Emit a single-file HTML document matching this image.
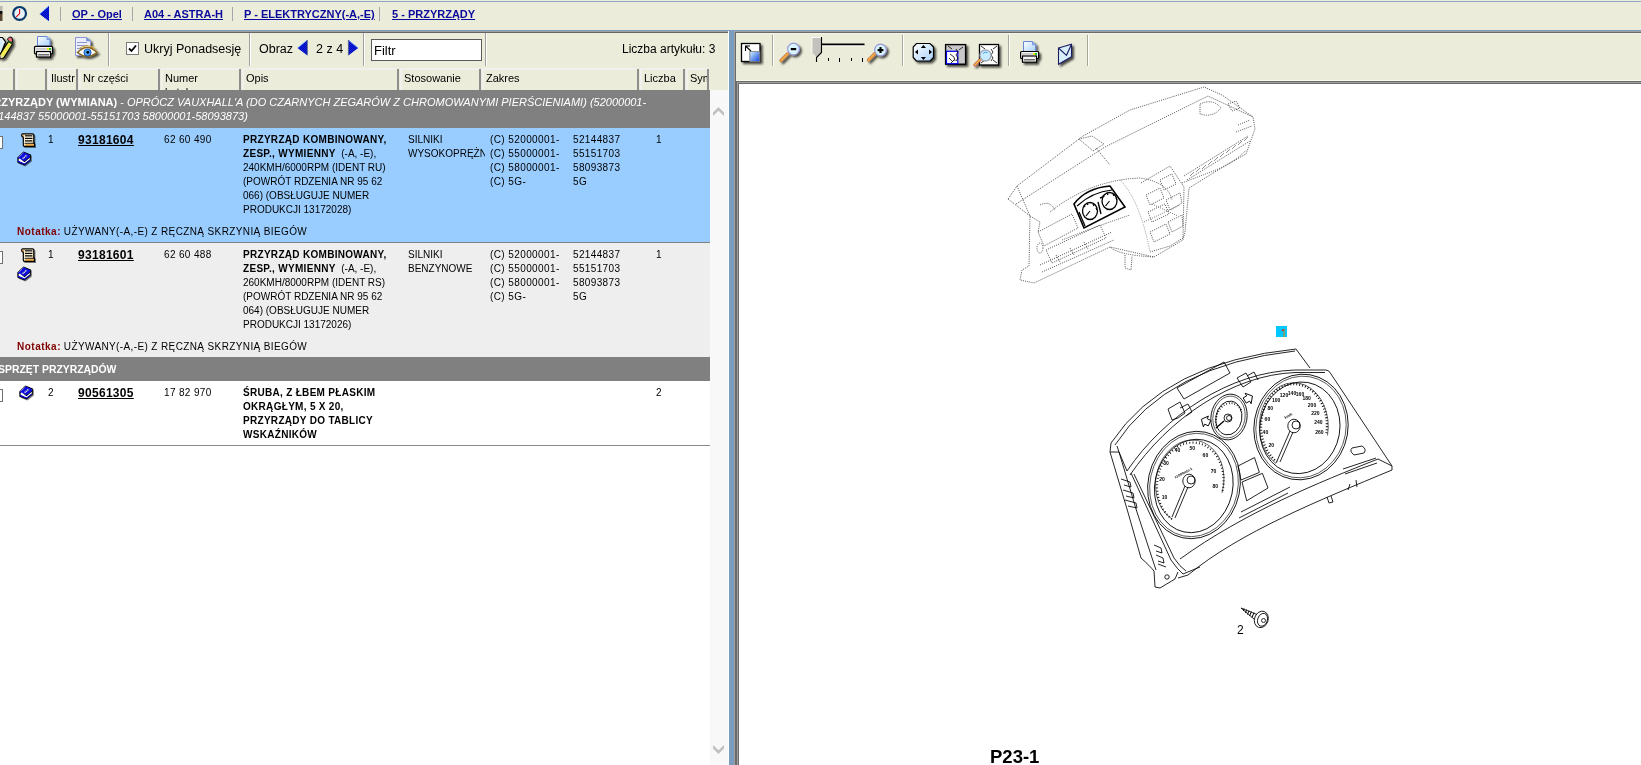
<!DOCTYPE html>
<html><head><meta charset="utf-8">
<style>
*{box-sizing:border-box}
html,body{will-change:transform;margin:0;padding:0;width:1641px;height:765px;overflow:hidden;background:#fff;font-family:"Liberation Sans",sans-serif;color:#000}
.a{position:absolute}
.nw{white-space:nowrap}
#top{left:0;top:0;width:1641px;height:30px;background:#ECECDA}
#topl1{left:0;top:1px;width:1641px;height:1px;background:#8FA8C8}
#topl2{left:0;top:30px;width:1641px;height:1px;background:#7A9CBF}
.sep{width:1px;background:#A7A6AA}
.lnk{font-weight:bold;font-size:11px;color:#0A0A9C;text-decoration:underline;text-underline-offset:1px;top:7px;line-height:14px}
#lp{left:0;top:31px;width:729px;height:734px;background:#fff;overflow:hidden}
#ltb{left:0;top:0;width:729px;height:37px;background:#ECECDA;border-top:2px solid #7A7A7A}
.tsep{width:2px;border-left:1px solid #A0A0A0;border-right:1px solid #fff}
#hdr{left:0;top:37px;width:710px;height:22px;background:#ECECDA}
.hc{top:68px;height:22px;background:#ECECDA;box-shadow:inset 2px 2px 0 #F0F0EC;font-size:11px;line-height:14px;padding:3px 0 0 5px;overflow:hidden}
.hs{top:69px;width:2px;height:21px;background:#8E8E8E}
.grp{left:0;width:710px;background:#808080;color:#fff;font-size:10px;line-height:14px;overflow:hidden}
.row{left:0;width:710px;font-size:10px;line-height:14px;overflow:hidden;border-bottom:1px solid #A0A0A0}
.b{font-weight:bold;letter-spacing:.3px}
#sb{left:710px;top:59px;width:18px;height:675px;background:#F8F8F8}
.t10{font-size:10px;line-height:14px;white-space:nowrap}
.dig{letter-spacing:.35px}
.pn{font-size:12px;font-weight:bold;line-height:15px;text-decoration:underline;letter-spacing:.3px;white-space:nowrap}
.nt{color:#800000;font-weight:bold;letter-spacing:.5px}
.cb{left:-10px;width:13px;height:13px;background:#fff;border:1px solid #707070}
.rsep{top:35px;width:2px;height:31px;border-left:1px solid #ACA899;border-right:1px solid #FFFFFF}
#split{left:729px;top:30px;width:5px;height:735px;background:#7A9CBF}
#rp{left:734px;top:31px;width:907px;height:734px;background:#ECECDA;border-top:2px solid #7A7A7A;border-left:2px solid #6A6A6A}
#draw{left:739px;top:83px;width:902px;height:682px;background:#fff}
</style></head><body>
<!-- TOP BREADCRUMB BAR -->
<div id="top" class="a"></div>
<div id="topl1" class="a"></div>
<div id="topl2" class="a"></div>
<div class="a sep" style="left:60px;top:7px;height:14px"></div>
<div class="a lnk nw" style="left:72px">OP - Opel</div>
<div class="a sep" style="left:132px;top:7px;height:14px"></div>
<div class="a lnk nw" style="left:144px">A04 - ASTRA-H</div>
<div class="a sep" style="left:232px;top:7px;height:14px"></div>
<div class="a lnk nw" style="left:244px">P - ELEKTRYCZNY(-A,-E)</div>
<div class="a sep" style="left:379px;top:7px;height:14px"></div>
<div class="a lnk nw" style="left:392px">5 - PRZYRZĄDY</div>

<!-- LEFT PANEL -->
<div class="a" style="left:0;top:31px;width:729px;height:1px;background:#A0A0A0"></div><div class="a" style="left:0;top:32px;width:728px;height:1px;background:#666"></div><div class="a" style="left:0;top:33px;width:728px;height:1px;background:#F6F6EA"></div>
<div class="a" style="left:0;top:33px;width:728px;height:35px;background:#ECECDA"></div>
<div class="a" style="left:728px;top:31px;width:1px;height:734px;background:#fff"></div>
<!-- toolbar separators -->
<div class="a tsep" style="left:108px;top:33px;height:33px"></div>
<div class="a tsep" style="left:249px;top:33px;height:33px"></div>
<div class="a tsep" style="left:363px;top:33px;height:33px"></div>
<div class="a tsep" style="left:485px;top:33px;height:33px"></div>
<!-- checkbox -->
<div class="a" style="left:126px;top:42px;width:13px;height:13px;background:#fff;border:1px solid #7A7A7A"></div>
<svg class="a" style="left:126px;top:42px" width="13" height="13"><path d="M3 6.5 L5.5 9 L10 3.5" stroke="#000" stroke-width="1.8" fill="none"/></svg>
<div class="a nw" style="left:144px;top:42px;font-size:12.5px;line-height:15px">Ukryj Ponadsesję</div>
<div class="a nw" style="left:259px;top:42px;font-size:12.5px;line-height:15px">Obraz</div>
<div class="a nw" style="left:316px;top:42px;font-size:12.5px;line-height:15px">2 z 4</div>
<div class="a" style="left:371px;top:39px;width:111px;height:22px;background:#fff;border:1px solid #5A5A5A"></div>
<div class="a nw" style="left:374px;top:43px;font-size:13px;line-height:15px">Filtr</div>
<div class="a nw" style="left:622px;top:42px;font-size:12px;line-height:15px">Liczba artykułu: 3</div>

<!-- column headers -->
<div class="a" style="left:0;top:68px;width:728px;height:22px;background:#ECECDA"></div>
<div class="a hc nw" style="left:0;width:14px;box-shadow:inset 0 2px 0 #F0F0EC"></div>
<div class="a hc nw" style="left:16px;width:30px"></div>
<div class="a hc nw" style="left:48px;width:29px;padding-left:3px">Ilustr</div>
<div class="a hc nw" style="left:79px;width:80px;padding-left:4px">Nr części</div>
<div class="a hc nw" style="left:161px;width:79px;padding-left:4px">Numer<br>katalogowy</div>
<div class="a hc nw" style="left:242px;width:156px;padding-left:4px">Opis</div>
<div class="a hc nw" style="left:400px;width:80px;padding-left:4px">Stosowanie</div>
<div class="a hc nw" style="left:482px;width:156px;padding-left:4px">Zakres</div>
<div class="a hc nw" style="left:640px;width:44px;padding-left:4px">Liczba</div>
<div class="a hc nw" style="left:686px;width:22px;padding-left:4px">Symbol</div>
<div class="a hs" style="left:13px"></div>
<div class="a hs" style="left:45px"></div>
<div class="a hs" style="left:76px"></div>
<div class="a hs" style="left:158px"></div>
<div class="a hs" style="left:239px"></div>
<div class="a hs" style="left:397px"></div>
<div class="a hs" style="left:479px"></div>
<div class="a hs" style="left:637px"></div>
<div class="a hs" style="left:683px"></div>
<div class="a hs" style="left:707px"></div>

<!-- group 1 -->
<div class="a grp" style="top:90px;height:38px"></div>
<div class="a" style="left:-14px;top:95px;width:760px;color:#fff;font-size:11px;line-height:14px"><b>PRZYRZĄDY (WYMIANA)</b> - <i>OPRÓCZ VAUXHALL'A (DO CZARNYCH ZEGARÓW Z CHROMOWANYMI PIERŚCIENIAMI) (52000001-<br>52144837 55000001-55151703 58000001-58093873)</i></div>

<!-- row 1 selected -->
<div class="a" style="left:0;top:128px;width:710px;height:114px;background:#99CCFF"></div>
<div class="a" style="left:0;top:242px;width:710px;height:1px;background:#808080"></div>
<div class="a cb" style="top:136px"></div>
<div class="a t10" style="left:48px;top:133px">1</div>
<div class="a pn" style="left:78px;top:133px">93181604</div>
<div class="a t10 dig" style="left:164px;top:133px">62 60 490</div>
<div class="a t10" style="left:243px;top:133px;width:160px"><span class="b">PRZYRZĄD KOMBINOWANY,<br>ZESP., WYMIENNY</span>&nbsp; (-A, -E),<br>240KMH/6000RPM (IDENT RU)<br>(POWRÓT RDZENIA NR 95 62<br>066) (OBSŁUGUJE NUMER<br>PRODUKCJI 13172028)</div>
<div class="a t10" style="left:408px;top:133px;width:77px;overflow:hidden">SILNIKI<br>WYSOKOPRĘŻNE</div>
<div class="a t10" style="left:490px;top:133px;letter-spacing:.4px">(C) 52000001-<br>(C) 55000001-<br>(C) 58000001-<br>(C) 5G-</div>
<div class="a t10 dig" style="left:573px;top:133px">52144837<br>55151703<br>58093873<br>5G</div>
<div class="a t10" style="left:656px;top:133px">1</div>
<div class="a t10" style="left:17px;top:225px"><span class="nt">Notatka:</span> <span style="letter-spacing:.38px">UŻYWANY(-A,-E) Z RĘCZNĄ SKRZYNIĄ BIEGÓW</span></div>

<!-- row 2 -->
<div class="a" style="left:0;top:243px;width:710px;height:114px;background:#EEEEEE"></div>
<div class="a cb" style="top:251px"></div>
<div class="a t10" style="left:48px;top:248px">1</div>
<div class="a pn" style="left:78px;top:248px">93181601</div>
<div class="a t10 dig" style="left:164px;top:248px">62 60 488</div>
<div class="a t10" style="left:243px;top:248px;width:160px"><span class="b">PRZYRZĄD KOMBINOWANY,<br>ZESP., WYMIENNY</span>&nbsp; (-A, -E),<br>260KMH/8000RPM (IDENT RS)<br>(POWRÓT RDZENIA NR 95 62<br>064) (OBSŁUGUJE NUMER<br>PRODUKCJI 13172026)</div>
<div class="a t10" style="left:408px;top:248px;width:77px;overflow:hidden">SILNIKI<br>BENZYNOWE</div>
<div class="a t10" style="left:490px;top:248px;letter-spacing:.4px">(C) 52000001-<br>(C) 55000001-<br>(C) 58000001-<br>(C) 5G-</div>
<div class="a t10 dig" style="left:573px;top:248px">52144837<br>55151703<br>58093873<br>5G</div>
<div class="a t10" style="left:656px;top:248px">1</div>
<div class="a t10" style="left:17px;top:340px"><span class="nt">Notatka:</span> <span style="letter-spacing:.38px">UŻYWANY(-A,-E) Z RĘCZNĄ SKRZYNIĄ BIEGÓW</span></div>

<!-- group 2 -->
<div class="a grp" style="top:357px;height:24px"></div>
<div class="a nw" style="left:-10px;top:363px;color:#fff;font-size:10.4px;line-height:14px;font-weight:bold">OSPRZĘT PRZYRZĄDÓW</div>

<!-- row 3 -->
<div class="a" style="left:0;top:381px;width:710px;height:64px;background:#fff"></div>
<div class="a" style="left:0;top:445px;width:710px;height:1px;background:#8A8A8A"></div>
<div class="a cb" style="top:389px"></div>
<div class="a t10" style="left:48px;top:386px">2</div>
<div class="a pn" style="left:78px;top:386px">90561305</div>
<div class="a t10 dig" style="left:164px;top:386px">17 82 970</div>
<div class="a t10" style="left:243px;top:386px;width:160px"><span class="b">ŚRUBA, Z ŁBEM PŁASKIM<br>OKRĄGŁYM, 5 X 20,<br>PRZYRZĄDY DO TABLICY<br>WSKAŹNIKÓW</span></div>
<div class="a t10" style="left:656px;top:386px">2</div>

<!-- ROW ICONS -->
<svg class="a" style="left:0;top:0;width:60px;height:420px" width="60" height="420">
<defs>
 <linearGradient id="parch" x1="0" y1="0" x2="1" y2="1"><stop offset="0" stop-color="#F4D8A0"/><stop offset="0.5" stop-color="#FFF6E0"/><stop offset="1" stop-color="#F0D098"/></linearGradient>
 <linearGradient id="roll" x1="0" y1="0" x2="0" y2="1"><stop offset="0" stop-color="#FFE8B0"/><stop offset="0.5" stop-color="#E8A040"/><stop offset="1" stop-color="#A86810"/></linearGradient>
 <symbol id="scroll" viewBox="0 0 14 14" width="14" height="14">
  <path d="M1.8 0.8 H11.5 Q12.8 0.8 12.8 2.2 V10.3 H13.4 V13.3 H3.4 Q2.3 13.3 2.3 12 V4 Q0.6 3.8 0.6 2.2 Q0.6 0.8 1.8 0.8 Z" fill="url(#parch)" stroke="#000" stroke-width="1.2"/>
  <path d="M1.6 1.8 Q2.6 2.2 2.4 4" stroke="#C08030" stroke-width="0.8" fill="none"/>
  <path d="M4 2.8 H11.4 M4 5.3 H11.4 M4 7.8 H11.4" stroke="#000" stroke-width="1.2"/>
  <path d="M4 4 H11.4 M4 6.5 H11.4" stroke="#FFF4DC" stroke-width="0.7" stroke-dasharray="1 0.8"/>
  <rect x="4.2" y="10.6" width="8.8" height="2.3" fill="url(#roll)"/>
  <path d="M3.6 10.3 H13.3" stroke="#000" stroke-width="0.9"/>
 </symbol>
 <symbol id="book" viewBox="0 0 15 15" width="15" height="15">
  <path d="M0.3 6.5 L6.5 0.4 L13.8 3.6 L13.8 9.6 L7.5 14.6 L0.3 11.6 Z" fill="#000"/>
  <path d="M1 6.6 L6.6 1.2 L13 4 L13 6 L7.5 10.2 L1 7.6 Z" fill="#0A0AE0"/>
  <path d="M1.6 8.2 L2.8 7.6 L7.5 11.2 L12.8 6.8 L12.8 8.6 L7.5 12.8 L1.6 10.2 Z" fill="#FFFFFF"/>
  <path d="M1 9.4 L7.5 12.6 L13 8.6 L13 9.4 L7.5 13.8 L1 11 Z" fill="#0A0AE0"/>
  <path d="M1.8 6.2 L6.4 1.8" stroke="#E8E8F8" stroke-width="0.9" stroke-dasharray="0.9 0.9"/>
  <path d="M5.6 7.6 L9.8 4.2" stroke="#E0E0C8" stroke-width="1.6" stroke-dasharray="1.2 0.5"/>
 </symbol>
 <filter id="sh2" x="-30%" y="-30%" width="170%" height="170%"><feGaussianBlur in="SourceAlpha" stdDeviation="0.6"/><feOffset dx="1" dy="1"/><feComponentTransfer><feFuncA type="linear" slope="0.5"/></feComponentTransfer><feMerge><feMergeNode/><feMergeNode in="SourceGraphic"/></feMerge></filter>
</defs>
<use href="#scroll" x="21" y="133" filter="url(#sh2)"/>
<use href="#book" x="17" y="151" filter="url(#sh2)"/>
<use href="#scroll" x="21" y="248" filter="url(#sh2)"/>
<use href="#book" x="17" y="266" filter="url(#sh2)"/>
<use href="#book" x="19" y="385" filter="url(#sh2)"/>
</svg>
<!-- scrollbar -->
<div class="a" style="left:710px;top:90px;width:18px;height:675px;background:#F8F8F8"></div>
<div class="a" style="left:728px;top:68px;width:1px;height:697px;background:#fff"></div>
<svg class="a" style="left:712px;top:105px" width="14" height="12"><path d="M1 11 L6.5 5.7 L12 11 L12 7.5 L6.5 2 L1 7.5 Z" fill="#C0C0C0"/></svg>
<svg class="a" style="left:712px;top:743px" width="14" height="12"><path d="M1 2 L6.5 7.3 L12 2 L12 5.5 L6.5 11 L1 5.5 Z" fill="#C0C0C0"/></svg>

<div id="split" class="a"></div>

<!-- RIGHT PANEL -->
<div class="a" style="left:734px;top:31px;width:907px;height:734px;background:#ECECDA"></div>
<div class="a" style="left:734px;top:31px;width:907px;height:1px;background:#A0A0A0"></div>
<div class="a" style="left:735px;top:32px;width:906px;height:1px;background:#6A6A6A"></div>
<div class="a" style="left:734px;top:31px;width:1px;height:734px;background:#A0A0A0"></div>
<div class="a" style="left:735px;top:32px;width:1px;height:733px;background:#6A6A6A"></div>
<div class="a" style="left:736px;top:33px;width:905px;height:1px;background:#F6F4E8"></div>
<div class="a" style="left:736px;top:80px;width:905px;height:1px;background:#F8F8EC"></div>
<div class="a" style="left:736px;top:81px;width:905px;height:1px;background:#6A6A6A"></div>
<div class="a" style="left:737px;top:82px;width:904px;height:1px;background:#A0A0A0"></div>
<div class="a" style="left:738px;top:83px;width:903px;height:1px;background:#6A6A6A"></div>
<div class="a" style="left:736px;top:81px;width:1px;height:684px;background:#6A6A6A"></div>
<div class="a" style="left:737px;top:82px;width:1px;height:683px;background:#A0A0A0"></div>
<div class="a" style="left:738px;top:83px;width:1px;height:682px;background:#6A6A6A"></div>
<div class="a" style="left:739px;top:84px;width:902px;height:681px;background:#fff"></div>
<div class="a rsep" style="left:772px"></div>
<div class="a rsep" style="left:902px"></div>
<div class="a rsep" style="left:1008px"></div>
<div class="a rsep" style="left:1087px"></div>
<!-- DRAWING -->
<svg class="a" style="left:739px;top:84px" width="902" height="681" viewBox="739 84 902 681">
<g fill="none" stroke="#000" stroke-width="0.85" stroke-linejoin="round">
 <!-- hood -->
 <path d="M1111,443 Q1165,362 1296,349 L1310,368"/>
 <path d="M1115,445 Q1167,365 1295,351"/>
 <path d="M1111,443 L1110,452 L1119,452 L1117,446"/>
 <path d="M1119,452 L1127,471"/>
 <!-- face top edge -->
 <path d="M1127,471 C1165,415 1230,372 1295,370 L1326,370 Q1329,370 1331,374"/>
 <path d="M1130,475 C1168,419 1232,375 1295,372.5 L1325,372.5"/>
 <!-- display rect on hood -->
 <path d="M1177,388 L1224,362 L1230,373 L1184,399 Z"/>
 <!-- clips on hood -->
 <path d="M1168,409 L1180,402 L1185,413 L1178,418 L1172,420 Z M1180,408 L1188,404 L1192,412 L1186,416"/>
 <path d="M1237,378 L1246,373 L1251,382 L1243,387 Z M1247,376 L1254,372 L1258,380"/>
 <!-- right housing -->
 <path d="M1331,374 L1392,466 L1392,470"/>
 <path d="M1392,470 C1320,500 1240,532 1188,575 L1178,578"/>
 <path d="M1378,459 C1320,482 1245,512 1180,559"/>
 <path d="M1392,466 L1378,459"/>
 <path d="M1241,512 L1290,487 M1343,469 L1376,458"/>
 <path d="M1239,518 L1288,493 M1345,474 L1377,463"/>
 <!-- left housing -->
 <path d="M1110,452 L1127,509 L1141,558 Q1150,566 1154,571 L1155,587 L1160,588 L1175,579 L1178,572"/>
 <path d="M1119,452 L1136,509 L1156,570"/>
 <path d="M1131,473 L1171,560 Q1178,570 1183,574 L1200,567"/>
 <path d="M1134,474 L1174,558 Q1180,567 1186,571"/>
 <!-- clips left -->
 <path d="M1121,479 L1130,482 L1131,487 L1124,485 M1123,490 L1133,493 L1134,498 L1126,496 M1125,500 L1136,503 L1137,508 L1128,506"/>
 <path d="M1154,545 L1161,548 L1162,553 L1156,551 M1156,555 L1163,558 L1164,563 L1158,561 M1158,564 L1166,567"/>
 <circle cx="1167" cy="577" r="2.2"/>
 <!-- tach gauge -->
 <g transform="rotate(12 1194 485)">
  <ellipse cx="1194" cy="485" rx="46" ry="54"/>
  <ellipse cx="1194" cy="485" rx="44" ry="52" stroke-width="0.6"/>
  <ellipse cx="1194" cy="486" rx="39" ry="47"/>
 </g>
 <!-- tach scale ticks (arc) -->
 <path d="M1172,519 A33 41 10 1 1 1222,493" stroke-width="2.2" stroke-dasharray="0.8 2.4"/>
 <path d="M1172,519 A34 42 10 1 1 1222,493" stroke-width="0.6"/>
 <ellipse cx="1189" cy="481" rx="6.2" ry="6.8"/>
 <circle cx="1191" cy="480" r="4"/>
 <path d="M1172,517 L1185,486 M1175,518 L1188,487"/>
 <!-- small gauge -->
 <g transform="rotate(10 1229 417)">
  <ellipse cx="1229" cy="417" rx="18" ry="23"/>
  <ellipse cx="1229" cy="417" rx="16" ry="21" stroke-width="0.6"/>
  <ellipse cx="1229" cy="418" rx="13" ry="17"/>
 </g>
 <path d="M1217,428 A12 15 10 1 1 1242,412" stroke-width="1.8" stroke-dasharray="0.8 2"/>
 <circle cx="1228" cy="418" r="4"/>
 <circle cx="1229" cy="418" r="2.5"/>
 <path d="M1216,428 L1224,421" stroke-width="1.3"/>
 <!-- turn arrows -->
 <path d="M1201,421 L1206,415 L1206,418 L1210,418 L1210,424 L1206,424 L1206,427 Z" transform="rotate(25 1205 421)"/>
 <path d="M1253,398 L1248,392 L1248,395 L1244,395 L1244,401 L1248,401 L1248,404 Z" transform="rotate(-30 1249 398)"/>
 <!-- speedo gauge -->
 <g transform="rotate(10 1301 427)">
  <ellipse cx="1301" cy="427" rx="47" ry="53"/>
  <ellipse cx="1301" cy="427" rx="45" ry="51" stroke-width="0.6"/>
  <ellipse cx="1300" cy="428" rx="40" ry="46"/>
 </g>
 <path d="M1277,462 A33 42 0 1 1 1326.2,435.1" stroke-width="2.4" stroke-dasharray="0.9 2.1"/>
 <path d="M1276,463.5 A34.5 43.5 0 1 1 1327.5,435.5" stroke-width="0.6"/>
 <ellipse cx="1294" cy="426" rx="6.2" ry="6.8"/>
 <circle cx="1296" cy="425" r="4"/>
 <path d="M1277,461 L1290,431 M1280,462 L1293,432"/>
 <!-- warning windows -->
 <path d="M1238,466 L1254.5,457.6 L1259.4,472.4 L1241,480 Z"/>
 <path d="M1242,482 L1262.4,473.3 L1268,488 L1246.7,500.8 Z"/>
 <!-- fuel nub -->
 <path d="M1352,448 L1362,446 Q1367,449 1364,453 L1354,455 Q1349,451 1352,448 Z"/>
 <!-- bottom tabs -->
 <path d="M1327,497 L1329,503 L1333,502 L1331,496 M1348,490 L1350,484"/>
 <path d="M1356,480 L1357,487"/>
</g>
<!-- gauge numbers -->
<g fill="#000" font-family="Liberation Sans" font-size="5" font-weight="bold" text-anchor="middle">
 <text x="1164.5" y="498.6">10</text>
 <text x="1162" y="480.6">20</text>
 <text x="1166" y="465.1">30</text>
 <text x="1177.6" y="452.0">40</text>
 <text x="1192.3" y="449.6">50</text>
 <text x="1205.4" y="456.9">60</text>
 <text x="1213.5" y="472.5">70</text>
 <text x="1215.2" y="488.0">80</text>
 <text x="1184" y="474" font-size="3.6" transform="rotate(-28 1184 474)">x1000min-1</text>
 <text x="1271.3" y="447.3" font-size="5">20</text>
 <text x="1265.4" y="433.6" font-size="5">40</text>
 <text x="1267.4" y="420.6" font-size="5">60</text>
 <text x="1270.3" y="409.6" font-size="5">80</text>
 <text x="1276.2" y="402.1" font-size="5">100</text>
 <text x="1284" y="396.6" font-size="5">120</text>
 <text x="1292" y="394.6" font-size="5">140</text>
 <text x="1300" y="395.6" font-size="5">160</text>
 <text x="1306.6" y="400.2" font-size="5">180</text>
 <text x="1312" y="406.6" font-size="5">200</text>
 <text x="1315.4" y="414.6" font-size="5">220</text>
 <text x="1318.3" y="423.8" font-size="5">240</text>
 <text x="1319.3" y="433.6" font-size="5">260</text>
 <text x="1289" y="417" font-size="3.6" transform="rotate(-28 1289 417)">km/h</text>
</g>
<!-- marker -->
<rect x="1276" y="326" width="11" height="11" fill="#00C8FF"/>
<rect x="1283.2" y="329" width="1.8" height="8" fill="#80A070"/>
<path d="M1281.8 330.8 L1284 329.5" stroke="#E01010" stroke-width="1.3"/>
<!-- screw -->
<g fill="none" stroke="#000" stroke-width="0.8">
 <path d="M1241,608 L1257,614.5 M1241,608 L1254,619"/>
 <path d="M1244,608.5 L1243.5,611 M1246.5,609.5 L1245.5,613 M1249,610.5 L1247.5,614.5 M1251.5,611.5 L1249.5,616 M1254,612.5 L1252,617.5" stroke-width="1"/>
 <ellipse cx="1261.3" cy="619.4" rx="6.8" ry="8.4" transform="rotate(20 1261.3 619.4)"/>
 <ellipse cx="1262.5" cy="619.8" rx="4.8" ry="6.6" transform="rotate(20 1262.5 619.8)"/>
 <circle cx="1263.5" cy="620.5" r="2"/>
</g>
<text x="1237" y="634" font-family="Liberation Sans" font-size="12" fill="#000">2</text>
<!-- P23-1 -->
<text x="990" y="763" font-family="Liberation Sans" font-size="18.5" font-weight="bold" fill="#000">P23-1</text>

<!-- DASHBOARD (dotted) -->
<g fill="none" stroke="#3A3A3A" stroke-width="0.8" stroke-dasharray="1.1 1.1">
 <!-- outer silhouette -->
 <path d="M1008,199 L1017,186 L1083,136 L1130,110 L1204,87 L1222,95 L1253,117 L1255,129 L1246,154 L1218,170 L1189,188 L1185,232 L1183,240 L1154,257 L1110,247 L1034,283 L1020,280 L1022,270 L1029,266 L1030,216 L1008,199 Z"/>
 <!-- top surface inner edge -->
 <path d="M1016,204 L1105,147 L1208,96 L1253,117"/>
 <path d="M1017,186 L1030,216"/>
 <path d="M1079,139 L1092,136 L1104,144 L1093,151 L1079,139 Z"/>
 <path d="M1096,148 L1110,165"/>
 <!-- instrument hood area -->
 <path d="M1050,212 Q1090,180 1140,178 Q1168,182 1172,200"/>
 <path d="M1062,240 Q1100,225 1130,215"/>
 <!-- right structure with vents -->
 <path d="M1182,183 Q1200,176 1216,170 Q1238,160 1246,150"/>
 <path d="M1184,176 L1248,136 M1187,180 L1250,141"/>
 <path d="M1190,176 L1194,172 M1196,172 L1200,168 M1202,169 L1206,165 M1208,165 L1212,161 M1214,161 L1218,157 M1220,157 L1224,153 M1226,153 L1230,149 M1232,149 L1236,145 M1238,145 L1242,141 M1244,141 L1248,137" stroke-dasharray="none" stroke="#777"/>
 <path d="M1200,104 Q1213,98 1221,108 Q1213,118 1200,114 Z"/>
 <path d="M1228,104 L1236,101 L1240,108 L1232,111 Z"/>
 <path d="M1238,125 L1250,120 M1236,132 L1252,126"/>
 <!-- center console -->
 <path d="M1141,183 L1170,166 L1184,187 L1183,238 L1170,246 L1150,252"/>
 <path d="M1146,195 L1160,188 L1164,198 L1150,205 Z M1160,180 L1172,174 L1176,184 L1164,190 Z"/>
 <path d="M1148,212 L1165,204 L1169,214 L1152,222 Z M1166,200 L1180,193 L1182,203 L1170,210 Z"/>
 <path d="M1150,232 L1166,224 L1170,234 L1154,242 Z M1168,222 L1182,215 L1183,226 L1172,232 Z"/>
 <path d="M1152,204 L1178,216 M1144,222 L1180,205" stroke="#666"/>
 <path d="M1125,255 L1125,268 L1131,270 L1132,256"/>
 <path d="M1110,247 Q1118,255 1154,257"/>
 <path d="M1120,180 Q1140,200 1150,252" stroke="#888"/>
 <!-- left lower structure -->
 <path d="M1038,232 L1072,214 L1078,228 L1044,246 Z"/>
 <path d="M1046,250 L1100,225 L1106,238 L1052,263 Z"/>
 <path d="M1040,265 L1112,232 M1042,272 L1114,240"/>
 <path d="M1056,255 L1060,262 M1070,248 L1074,255 M1084,242 L1088,249"/>
 <ellipse cx="1040" cy="248" rx="3" ry="5"/>
 <path d="M1030,216 L1040,222 L1038,232"/>
 <path d="M1040,205 Q1050,200 1055,210"/>
</g>
<!-- mini cluster in dashboard -->
<g fill="none" stroke="#000" stroke-width="1">
 <path d="M1074,204 Q1086,188 1110,186 L1125,207 L1084,228 Z" stroke-width="1.6"/>
 <path d="M1077,206 Q1092,192 1112,190" stroke-width="1.2"/>
 <ellipse cx="1090" cy="211" rx="7.5" ry="8.5" stroke-width="1.3"/>
 <ellipse cx="1109.5" cy="201" rx="7.5" ry="8.5" stroke-width="1.3"/>
 <path d="M1090,211 L1086,216 M1109.5,201 L1105.5,206" stroke-width="1.2"/>
 <path d="M1084,205 L1085,207 M1087,203 L1088,205 M1093,204 L1094,206 M1096,208 L1097,210 M1103,195 L1104,197 M1107,193 L1108,195 M1113,194 L1114,196 M1116,198 L1117,200" stroke-width="1.2"/>
 <path d="M1098,202 L1101,214 M1100,198 L1103,197" stroke-width="1.4"/>
 <path d="M1079,212 L1085,226" stroke-width="1.3"/>
</g>
</svg>
<!-- ICONS -->
<svg class="a" style="left:0;top:0" width="1641" height="70" viewBox="0 0 1641 70">
<defs>
 <filter id="sh" x="-30%" y="-30%" width="170%" height="170%"><feGaussianBlur in="SourceAlpha" stdDeviation="0.9"/><feOffset dx="1.5" dy="1.5"/><feComponentTransfer><feFuncA type="linear" slope="0.7"/></feComponentTransfer><feMerge><feMergeNode/><feMergeNode in="SourceGraphic"/></feMerge></filter>
 <linearGradient id="lb" x1="0" y1="0" x2="1" y2="1"><stop offset="0" stop-color="#FFFFFF"/><stop offset="1" stop-color="#A8D0F8"/></linearGradient>
 <linearGradient id="bq" x1="0" y1="0" x2="1" y2="1"><stop offset="0" stop-color="#D0F4FF"/><stop offset="1" stop-color="#1040E0"/></linearGradient>
 <pattern id="dith" width="2" height="2" patternUnits="userSpaceOnUse"><rect width="2" height="2" fill="#0000B0"/><rect width="1" height="1" fill="#0A2AE8"/><rect x="1" y="1" width="1" height="1" fill="#0A2AE8"/></pattern>
</defs>
<!-- top partial icon -->
<rect x="0" y="6" width="2.5" height="5" fill="#B8B8B0"/>
<rect x="0" y="11" width="2.5" height="3" fill="#101010"/>
<rect x="0" y="14" width="2.5" height="7" fill="#5A4630"/>
<!-- clock -->
<circle cx="19.6" cy="13.4" r="6.4" fill="#E8F4FC" stroke="#0A3A6A" stroke-width="2.2"/>
<path d="M19.6 9 V13.6 L16.3 16.8" stroke="#E00000" stroke-width="1.1" fill="none"/>
<!-- top back triangle -->
<path d="M39.6 14 L49 5.8 L49 21.2 Z" fill="url(#dith)"/>
<path d="M39.6 14 L48.5 6.2" stroke="#80C8FF" stroke-width="0.8"/>
<!-- pencil + doc (clipped) -->
<g filter="url(#sh)">
<path d="M-3 37.5 L2.5 37.5 L5.5 42 L0 56 L-3 58 Z" fill="#D8ECFF" stroke="#000" stroke-width="1.2"/>
<path d="M2 40 L4.5 43" stroke="#fff" stroke-width="1"/>
<path d="M8.5 41.5 L12.5 44 L4 57.5 L0.5 58.5 L0 54.5 Z" fill="#F2EC58" stroke="#000" stroke-width="1.1"/>
<path d="M0.3 54.5 L3.5 57.3 L0.5 58.5 Z" fill="#E8E4B8"/>
<path d="M7.5 39 L9.5 37 L12 37.5 L12.5 40.5 L12 43 L8.5 41 Z" fill="#F07080" stroke="#000" stroke-width="1"/>
<path d="M8 40.8 L12.4 43.4" stroke="#1E6A2A" stroke-width="1.3"/>
</g>
<!-- printer left -->
<g filter="url(#sh)">
<path d="M37.5 36.5 H47 L50 39.5 V46 H37.5 Z" fill="url(#lb)" stroke="#6A84D8" stroke-width="1"/>
<path d="M47 36.5 V39.5 H50" fill="#A0C8F8" stroke="#6A84D8" stroke-width="0.8"/>
<rect x="34.5" y="46.3" width="18" height="7.5" rx="1" fill="#FAFAFA" stroke="#000" stroke-width="1.2"/>
<rect x="36" y="48" width="15" height="1.8" fill="#C8C8C8"/>
<rect x="47" y="48" width="2" height="1.8" fill="#F0F000"/><rect x="49" y="48" width="2" height="1.8" fill="#20C020"/>
<rect x="36.5" y="51.5" width="14" height="5.5" fill="#F4F4F4" stroke="#000" stroke-width="1.2"/>
<rect x="38" y="54" width="11" height="1.5" fill="#707070"/>
</g>
<!-- eye doc -->
<g filter="url(#sh)">
<path d="M75.5 37.5 H86.5 L90.5 41 V55.5 H75.5 Z" fill="#ECEEFF" stroke="#8C94D8" stroke-width="1"/>
<path d="M86.5 37.5 V41 H90.5" fill="#6090E0" stroke="#8C94D8" stroke-width="0.7"/>
<path d="M77 42.5 H87 M77 45.5 H88 M77 48.5 H85" stroke="#8898D0" stroke-width="1"/>
<path d="M77.5 52.5 Q87 42.5 97 52.5 Q87 60 77.5 52.5 Z" fill="#FFFFFF" stroke="#8A6A20" stroke-width="1.5"/>
<circle cx="87.5" cy="52.5" r="3.6" fill="#4AA0F0" stroke="#1040B0" stroke-width="0.8"/>
<circle cx="87.8" cy="52.3" r="1.4" fill="#000"/>
<path d="M79 48.5 Q87 43 95 48.5" stroke="#D8A830" stroke-width="1" fill="none"/>
</g>
<!-- nav triangles -->
<path d="M297.5 48 L307.1 40 L307.1 55.3 Z" fill="url(#dith)"/>
<path d="M298 47.6 L306.6 40.6" stroke="#80C8FF" stroke-width="0.7"/>
<path d="M307.3 40 V55.3" stroke="#3A4A70" stroke-width="0.8"/>
<path d="M358.2 48 L348.6 40 L348.6 55.3 Z" fill="url(#dith)"/>
<path d="M349 40.6 L357.6 47.6" stroke="#80C8FF" stroke-width="0.7"/>
<path d="M348.4 40 V55.3" stroke="#3A4A70" stroke-width="0.8"/>

<!-- RIGHT TOOLBAR -->
<!-- fit -->
<g filter="url(#sh)">
<rect x="741.5" y="43.5" width="18.5" height="18" fill="#fff" stroke="#000" stroke-width="1.3"/>
<rect x="749.8" y="51.6" width="10" height="10" fill="url(#bq)" stroke="#808080" stroke-width="0.9"/>
<path d="M751 51 L746 46.5 M745.5 51 V46 H750" stroke="#000" stroke-width="1.1" fill="none"/>
</g>
<!-- zoom out -->
<g filter="url(#sh)">
<path d="M781 60.5 L787.5 54" stroke="#B07840" stroke-width="3.2" stroke-linecap="round"/>
<path d="M781 60.5 L787.5 54" stroke="#F8A848" stroke-width="2" stroke-linecap="round"/>
<circle cx="793.5" cy="49" r="5.8" fill="#D8F4FF" stroke="#9898D8" stroke-width="1.2"/>
<rect x="790.8" y="48" width="5.4" height="2.2" fill="#000"/>
</g>
<!-- slider -->
<path d="M812 37.5 H821.5 V52.5 L816.8 57 L812 52.5 Z" fill="#C4C2BC"/>
<path d="M812 52.5 V37.5 H821.5" stroke="#fff" stroke-width="0.8" fill="none"/>
<path d="M821.5 37 V52.5 L816.5 57.5 V62" stroke="#000" stroke-width="1.1" fill="none"/>
<rect x="822" y="43.5" width="42.5" height="2" fill="#000"/>
<rect x="822" y="45.5" width="42.5" height="1" fill="#fff"/>
<rect x="828" y="58" width="1" height="3" fill="#000"/>
<rect x="839" y="58" width="1" height="4" fill="#000"/>
<rect x="851" y="58" width="1" height="3" fill="#000"/>
<rect x="862" y="58" width="1" height="4" fill="#000"/>
<!-- zoom in -->
<g filter="url(#sh)">
<path d="M868.5 60 L875 53.5" stroke="#B07840" stroke-width="3.2" stroke-linecap="round"/>
<path d="M868.5 60 L875 53.5" stroke="#F8A848" stroke-width="2" stroke-linecap="round"/>
<circle cx="880.5" cy="50" r="5.8" fill="#D8F4FF" stroke="#9898D8" stroke-width="1.2"/>
<rect x="877.6" y="49" width="5.8" height="2.2" fill="#000"/>
<rect x="879.4" y="47.1" width="2.2" height="5.9" fill="#000"/>
</g>
<!-- pan -->
<g filter="url(#sh)">
<path d="M916.5 43.5 H930 L933.5 47 V57.5 L930 61 H916.5 L913.2 57.5 V47 Z" fill="url(#lb)" stroke="#000" stroke-width="1.2"/>
<path d="M923.4 45 L926 48 H920.8 Z M923.4 60 L926 57 H920.8 Z M915 52 L918 49.4 V54.6 Z M932 52 L929 49.4 V54.6 Z" fill="#000"/>
</g>
<!-- zoom window -->
<g filter="url(#sh)">
<rect x="945.6" y="44.6" width="20" height="19.6" fill="#C8C8C8" stroke="#000" stroke-width="1.4"/>
<rect x="946.5" y="51.3" width="11.3" height="12.4" fill="#fff" stroke="#0000F0" stroke-width="1.2"/>
<path d="M948 46 L952 49 M963 47 L959 50 M956 49 L958 52 L956 55 L958 58 L956 61 M950 54 L954 57 L955 61 M949 58 L953 62 M951 63 L954 60" stroke="#000" stroke-width="0.8" fill="none"/>
</g>
<!-- zoom magnify doc -->
<g filter="url(#sh)">
<rect x="979.5" y="44.5" width="19" height="20.5" fill="#fff" stroke="#000" stroke-width="1.3"/>
<path d="M981 46 L985 49 M997 46 L993 49 M991 49 L993 52 L991 55 L993 58 L991 61 M981 63 L985 60 M997 63 L993 60" stroke="#000" stroke-width="0.8" fill="none"/>
<path d="M974.8 65 L980.5 59.5" stroke="#C85050" stroke-width="3" stroke-linecap="round"/>
<path d="M974.8 65 L980.5 59.5" stroke="#F0C040" stroke-width="1.4" stroke-linecap="round"/>
<circle cx="985.5" cy="55.5" r="5.5" fill="#C8ECFF" stroke="#A0A8B8" stroke-width="1.4"/>
<path d="M983 53.5 Q985 51.5 987.5 52.5" stroke="#40A0E8" stroke-width="1" fill="none"/>
</g>
<!-- printer right -->
<g filter="url(#sh)">
<path d="M1023.5 41.5 H1032.5 L1035.7 44.7 V51.5 H1023.5 Z" fill="url(#lb)" stroke="#6A84D8" stroke-width="1"/>
<path d="M1032.5 41.5 V44.7 H1035.7" fill="#A0C8F8" stroke="#6A84D8" stroke-width="0.8"/>
<rect x="1020.6" y="51.5" width="18" height="7" rx="1" fill="#FAFAFA" stroke="#000" stroke-width="1.2"/>
<rect x="1022" y="53" width="15" height="1.8" fill="#C8C8C8"/>
<rect x="1033" y="53" width="2" height="1.8" fill="#F0F000"/><rect x="1035" y="53" width="2" height="1.8" fill="#20C020"/>
<rect x="1022.5" y="56" width="14" height="6.2" fill="#F4F4F4" stroke="#000" stroke-width="1.2"/>
<rect x="1024" y="59" width="11" height="1.5" fill="#707070"/>
</g>
<!-- envelope -->
<g filter="url(#sh)">
<path d="M1058.5 48 L1071.5 44.2 V56.8 L1058.5 64.2 Z" fill="#D8EEFA" stroke="#1A1A60" stroke-width="1.1"/>
<path d="M1058.5 48 L1066.5 55.3 L1071.5 44.2" stroke="#1A1A60" stroke-width="1.1" fill="none"/>
</g>
</svg>
</body></html>
